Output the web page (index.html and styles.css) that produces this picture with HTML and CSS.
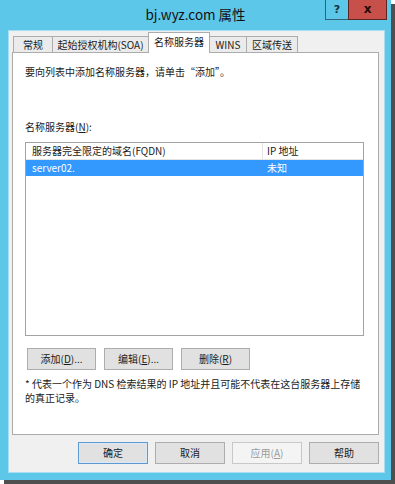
FILE: index.html
```html
<!DOCTYPE html>
<html lang="zh-CN">
<head>
<meta charset="utf-8">
<title>bj.wyz.com 属性</title>
<link rel="stylesheet" href="styles.css">
</head>
<body>
<div class="window">
  <div class="titlebar">
    <div class="tb-spacer"></div>
    <div class="title">bj.wyz.com 属性</div>
    <div class="caption-btns">
      <div class="cbtn cbtn-help">?</div>
      <div class="cbtn cbtn-close">x</div>
    </div>
  </div>
  <div class="client">
    <div class="tabs">
      <div class="tab tab-general">常规</div>
      <div class="tab tab-soa">起始授权机构(SOA)</div>
      <div class="tab tab-ns tab-active">名称服务器</div>
      <div class="tab tab-wins">WINS</div>
      <div class="tab tab-zone">区域传送</div>
    </div>
    <div class="panel">
      <p class="desc">要向列表中添加名称服务器，请单击“添加”。</p>
      <div class="label">名称服务器(<u>N</u>):</div>
      <div class="listview">
        <div class="lv-row lv-head">
          <div class="c1">服务器完全限定的域名(FQDN)</div>
          <div class="c2">IP 地址</div>
        </div>
        <div class="lv-row lv-sel">
          <div class="c1">server02.</div>
          <div class="c2">未知</div>
        </div>
      </div>
      <div class="btnrow">
        <button class="btn btn-sm">添加(<u>D</u>)...</button>
        <button class="btn btn-sm">编辑(<u>E</u>)...</button>
        <button class="btn btn-sm">删除(<u>R</u>)</button>
      </div>
      <p class="note">* 代表一个作为 DNS 检索结果的 IP 地址并且可能不代表在这台服务器上存储<br>的真正记录。</p>
    </div>
    <div class="footer">
      <button class="btn btn-ft btn-default">确定</button>
      <button class="btn btn-ft">取消</button>
      <button class="btn btn-ft btn-disabled">应用(<u>A</u>)</button>
      <button class="btn btn-ft">帮助</button>
    </div>
  </div>
</div>
</body>
</html>
```

FILE: styles.css
```css
html, body {
  margin: 0;
  padding: 0;
  background: #ffffff;
}
body {
  font-family: "Noto Sans CJK SC", "Noto Sans", sans-serif;
  font-size: 10px;
  color: #1a1a1a;
  width: 395px;
  height: 484px;
  overflow: hidden;
}
.window {
  width: 391px;
  height: 480px;
  background: #5dc7e9;
  display: flex;
  flex-direction: column;
  box-shadow: 4px 4px 0 0 #4f4f4f;
}
.titlebar {
  height: 30px;
  flex: none;
  display: flex;
  align-items: flex-start;
  padding-right: 4px;
}
.tb-spacer {
  width: 66px;
  flex: none;
}
.title {
  flex: 1;
  text-align: center;
  font-size: 13.5px;
  line-height: 16px;
  padding-top: 6px;
  color: #111111;
  white-space: nowrap;
}
.caption-btns {
  flex: none;
  display: flex;
  width: 62px;
  height: 20px;
}
.cbtn {
  box-sizing: border-box;
  height: 20px;
  display: flex;
  align-items: center;
  justify-content: center;
  font-weight: bold;
  font-family: "DejaVu Sans", sans-serif;
}
.cbtn-help {
  width: 23px;
  background: #5dc7e9;
  border-left: 1px solid #2f6478;
  border-bottom: 1px solid #2f6478;
  font-size: 11px;
  color: #15303c;
}
.cbtn-close {
  width: 39px;
  background: #c7504a;
  border-left: 1px solid #5e2522;
  border-right: 1px solid #5e2522;
  border-bottom: 1px solid #5e2522;
  font-size: 12px;
  color: #1c0c0b;
  padding-bottom: 2px;
}
.client {
  flex: 1;
  margin: 0 6px 7px 8px;
  border: 1px solid #a9def1;
  background: #f0f0f0;
  padding: 1px 5px 8px 3px;
  display: flex;
  flex-direction: column;
}
.tabs {
  height: 21px;
  display: flex;
  align-items: flex-end;
  padding-left: 1px;
  margin-bottom: -1px;
  position: relative;
  z-index: 1;
}
.tab {
  box-sizing: border-box;
  height: 16px;
  margin-bottom: 1px;
  margin-left: -1px;
  border: 1px solid #acacac;
  border-bottom: none;
  background: #ebebeb;
  text-align: center;
  line-height: 15px;
  white-space: nowrap;
}
.tab-general { width: 40px; margin-left: 0; }
.tab-soa { width: 97px; }
.tab-ns { width: 62px; }
.tab-wins { width: 38px; }
.tab-zone { width: 52px; }
.tab-active {
  height: 21px;
  margin-bottom: 0;
  background: #ffffff;
  position: relative;
  z-index: 2;
  line-height: 17px;
}
.panel {
  flex: 1;
  background: #ffffff;
  border: 1px solid #acacac;
  padding: 12px 12px 0 12px;
}
.desc {
  margin: 0;
  line-height: 14px;
}
.label {
  margin-top: 41px;
  line-height: 14px;
}
.listview {
  margin-top: 8px;
  width: 339px;
  height: 194px;
  box-sizing: border-box;
  border: 1px solid #a3a3a3;
}
.lv-row {
  display: flex;
  height: 16px;
  line-height: 16px;
}
.lv-head {
  border-bottom: 1px solid #e3e3e3;
}
.c1 {
  width: 237px;
  padding-left: 6px;
  box-sizing: border-box;
  white-space: nowrap;
}
.lv-head .c1 {
  border-right: 1px solid #e3e3e3;
}
.c2 {
  flex: 1;
  padding-left: 4px;
  white-space: nowrap;
}
.lv-sel {
  background: #3399ff;
  color: #ffffff;
}
.btnrow {
  display: flex;
  gap: 8px;
  margin-top: 12px;
  margin-left: 2px;
}
.btn {
  font-family: "Noto Sans CJK SC", "Noto Sans", sans-serif;
  font-size: 10px;
  color: #1a1a1a;
  background: #e1e1e1;
  border: 1px solid #adadad;
  height: 22px;
  padding: 0;
  margin: 0;
  line-height: 18px;
}
.btn-sm {
  width: 69px;
}
.note {
  margin: 7px 0 0 0;
  line-height: 14px;
  white-space: nowrap;
}
.footer {
  display: flex;
  justify-content: flex-end;
  gap: 7px;
  margin-top: 7px;
}
.btn-ft {
  width: 70px;
}
.btn-default {
  border-color: #5e9ad0;
  box-shadow: inset 0 0 0 1px #d8e8f6;
}
.btn-disabled {
  background: #f4f4f4;
  border-color: #c8c8c8;
  color: #9a9a9a;
}
```
